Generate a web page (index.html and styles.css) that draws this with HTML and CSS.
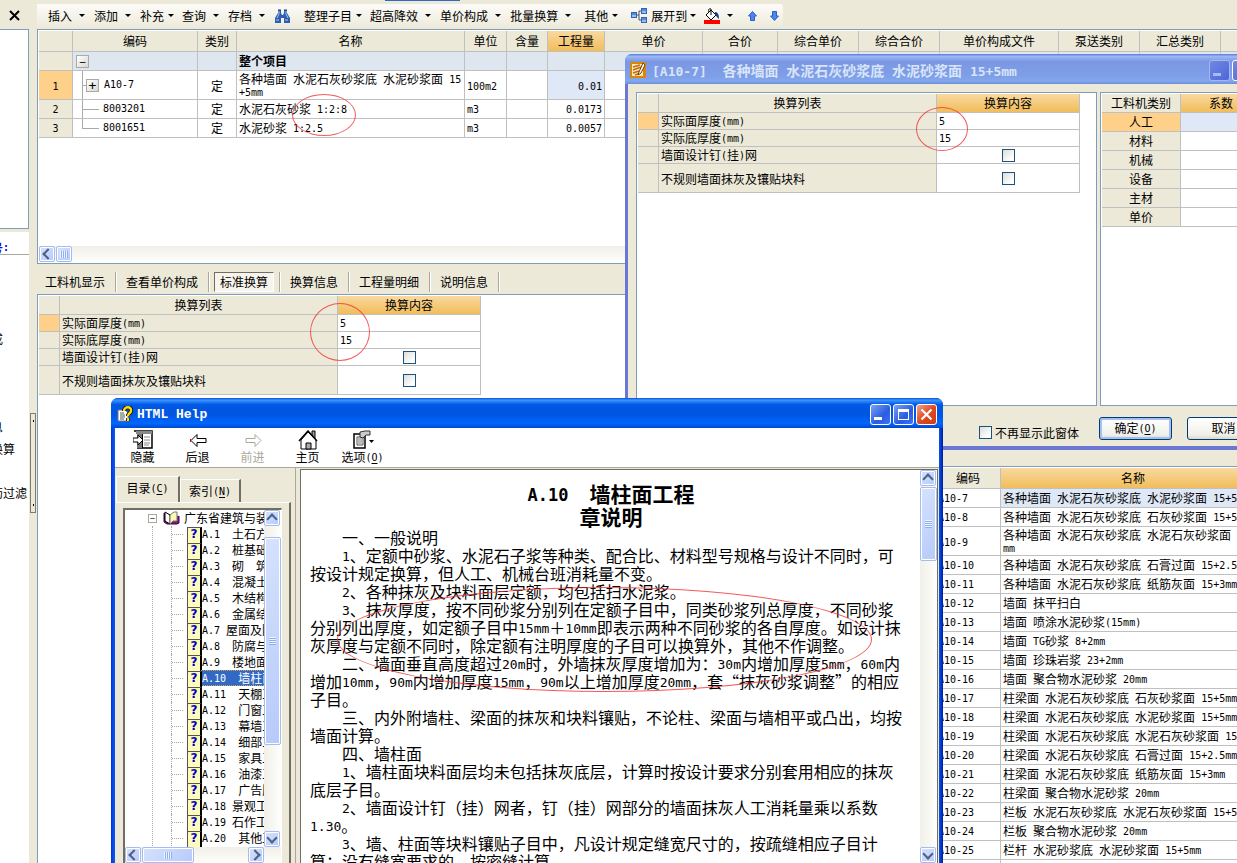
FILE: index.html
```html
<!DOCTYPE html>
<html lang="zh-CN">
<head>
<meta charset="utf-8">
<title>工程计价</title>
<link rel="stylesheet" href="styles.css">
</head>
<body>
<div class="desktop">
  <div class="app">
    <aside class="sidebar">
      <div class="sidebar-bar"><button class="plain" aria-label="关闭"><svg width="11" height="11" viewBox="0 0 11 11"><path d="M1 1L10 10M10 1L1 10" stroke="#000" stroke-width="2"/></svg></button></div>
      <div class="sidebar-top"></div>
      <div class="sidebar-bottom">
        <a class="sidebar-link" href="#">专业编号:</a>
        <ul class="sidebar-list">
          <li>已组成</li>
          <li class="skip-three">材信息</li>
          <li>标准换算</li>
          <li class="skip-one">材料药过滤</li>
        </ul>
      </div>
    </aside>
    <div class="gutter"><button class="grip" aria-label="折叠面板"><i></i><i></i></button></div>
    <main class="main">
      <div class="top-strip"><span class="top-accent"></span></div>
      <nav class="toolbar">
        <i class="handle"></i>
        <button class="menu">插入</button>
        <button class="menu">添加</button>
        <button class="menu tight">补充</button>
        <button class="menu">查询</button>
        <button class="menu">存档</button>
        <button class="plain" aria-label="查找"><svg width="17" height="16" viewBox="0 0 17 16"><path d="M4 2h3v3l1 2h1l1-2V2h3v3l3 5v5H10v-5H7v5H1v-5l3-5z" fill="#2f5fb0"/><path d="M5 3v3L3 10M12 3v3l2 4M2 12h3M11 12h3" stroke="#a9c8f5" fill="none"/><path d="M4 2h3M10 2h3" stroke="#1b3a78"/></svg></button>
        <i class="sep"></i>
        <button class="menu tight">整理子目</button>
        <button class="menu">超高降效</button>
        <button class="menu">单价构成</button>
        <button class="menu">批量换算</button>
        <i class="sep"></i>
        <button class="menu tight">其他</button>
        <i class="sep"></i>
        <button class="menu tight icon-menu"><svg width="17" height="16" viewBox="0 0 17 16"><path d="M5 7h3M8 3v9M8 3h3M8 12h3" stroke="#555" fill="none"/><g fill="#8ec0f5" stroke="#3565b5"><rect x=".5" y="4.500" width="5" height="5"/><rect x="10.500" y=".5" width="5" height="5"/><rect x="10.500" y="9.500" width="5" height="5"/></g><path d="M1 6h4M11 2h4M11 11h4" stroke="#2255c0"/></svg>展开到</button>
        <button class="menu" aria-label="填充颜色"><svg width="16" height="16" viewBox="0 0 16 16"><path d="M2 7l5-5 5 5-5 5z" fill="#fff" stroke="#000"/><path d="M7 7V1c-2-1-3 1-2 3" stroke="#000" fill="none"/><path d="M11 4c3 0 4 3 4 7-2-1-2-3-4-4z" fill="#123a90"/><path d="M0 12h16v4H0z" fill="#f00"/></svg></button>
        <button class="plain arrow-btn" aria-label="上移"><svg width="9" height="10" viewBox="0 0 9 10"><path d="M4.500 .5L8.500 5H6.500V9.500H2.500V5H.5z" fill="#4d86ee" stroke="#2d5fc8"/></svg></button>
        <button class="plain arrow-btn" aria-label="下移"><svg width="9" height="10" viewBox="0 0 9 10"><path d="M4.500 9.500L8.500 5H6.500V.5H2.500V5H.5z" fill="#4d86ee" stroke="#2d5fc8"/></svg></button>
      </nav>
      <section class="panel quota">
        <table class="grid quota-grid">
          <colgroup><col class="w34"><col class="w125"><col class="w39"><col class="w228"><col class="w42"><col class="w41"><col class="w57"><col class="w98"><col class="w75"><col class="w81"><col class="w81"><col class="w119"><col class="w81"><col class="w81"><col class="w81"></colgroup>
          <thead><tr class="h21"><th></th><th>编码</th><th>类别</th><th>名称</th><th>单位</th><th>含量</th><th class="hot">工程量</th><th>单价</th><th>合价</th><th>综合单价</th><th>综合合价</th><th>单价构成文件</th><th>泵送类别</th><th>汇总类别</th><th></th></tr></thead>
          <tbody>
            <tr class="h19 project"><td class="num"></td><td><div class="code root"><button class="toggle" aria-label="折叠">−</button></div></td><td></td><td><b>整个项目</b></td><td></td><td></td><td></td><td></td><td></td><td></td><td></td><td></td><td></td><td></td><td></td></tr>
            <tr class="h29"><td class="num picked">1</td><td><div class="code"><span class="stem mid"></span><button class="toggle" aria-label="展开">+</button>A10-7</div></td><td class="center">定</td><td>各种墙面 水泥石灰砂浆底 水泥砂浆面 15<br>+5mm</td><td>100m2</td><td></td><td class="right soft">0.01</td><td></td><td></td><td></td><td></td><td></td><td></td><td></td><td></td></tr>
            <tr class="h19"><td class="num">2</td><td><div class="code"><span class="stem mid long"></span>8003201</div></td><td class="center">定</td><td>水泥石灰砂浆 1:2:8</td><td>m3</td><td></td><td class="right">0.0173</td><td></td><td></td><td></td><td></td><td></td><td></td><td></td><td></td></tr>
            <tr class="h19"><td class="num">3</td><td><div class="code"><span class="stem long"></span>8001651</div></td><td class="center">定</td><td>水泥砂浆 1:2.5</td><td>m3</td><td></td><td class="right">0.0057</td><td></td><td></td><td></td><td></td><td></td><td></td><td></td><td></td></tr>
          </tbody>
        </table>
        <div class="scroll-x"><button class="sb left" aria-label="向左滚动"></button><span class="thumb-x"></span></div>
      </section>
      <div class="lower">
        <div class="detail">
          <nav class="tabs">
            <button>工料机显示</button><i></i><button>查看单价构成</button><i></i><button class="pressed">标准换算</button><i></i><button>换算信息</button><i></i><button>工程量明细</button><i></i><button>说明信息</button><i></i>
          </nav>
          <section class="panel detail-panel">
            <table class="grid convert">
              <colgroup><col class="w21"><col class="w278"><col class="w143"></colgroup>
              <thead><tr class="h19"><th></th><th>换算列表</th><th class="hot">换算内容</th></tr></thead>
              <tbody>
                <tr class="h17"><td class="picked"></td><td class="name">实际面厚度(mm)</td><td>5</td></tr>
                <tr class="h17"><td class="name"></td><td class="name">实际底厚度(mm)</td><td>15</td></tr>
                <tr class="h17"><td class="name"></td><td class="name"><label for="net1">墙面设计钉(挂)网</label></td><td class="center"><input type="checkbox" id="net1"></td></tr>
                <tr class="h29"><td class="name"></td><td class="name"><label for="irr1">不规则墙面抹灰及镶贴块料</label></td><td class="center"><input type="checkbox" id="irr1"></td></tr>
              </tbody>
            </table>
          </section>
        </div>
        <section class="panel catalog">
          <table class="grid catalog-grid">
            <colgroup><col class="w34"><col class="w65"><col class="w265"></colgroup>
            <thead><tr class="h21"><th></th><th>编码</th><th class="hot">名称</th></tr></thead>
            <tbody>
              <tr class="h19"><td></td><td>A10-7</td><td class="soft">各种墙面 水泥石灰砂浆底 水泥砂浆面 15+5mm</td></tr>
              <tr class="h19"><td></td><td>A10-8</td><td>各种墙面 水泥石灰砂浆底 石灰砂浆面 15+5mm</td></tr>
              <tr class="h29"><td></td><td>A10-9</td><td>各种墙面 水泥石灰砂浆底 水泥石灰砂浆面 15+5<br>mm</td></tr>
              <tr class="h19"><td></td><td>A10-10</td><td>各种墙面 水泥石灰砂浆底 石膏过面 15+2.5mm</td></tr>
              <tr class="h19"><td></td><td>A10-11</td><td>各种墙面 水泥石灰砂浆底 纸筋灰面 15+3mm</td></tr>
              <tr class="h19"><td></td><td>A10-12</td><td>墙面 抹平扫白</td></tr>
              <tr class="h19"><td></td><td>A10-13</td><td>墙面 喷涂水泥砂浆(15mm)</td></tr>
              <tr class="h19"><td></td><td>A10-14</td><td>墙面 TG砂浆 8+2mm</td></tr>
              <tr class="h19"><td></td><td>A10-15</td><td>墙面 珍珠岩浆 23+2mm</td></tr>
              <tr class="h19"><td></td><td>A10-16</td><td>墙面 聚合物水泥砂浆 20mm</td></tr>
              <tr class="h19"><td></td><td>A10-17</td><td>柱梁面 水泥石灰砂浆底 石灰砂浆面 15+5mm</td></tr>
              <tr class="h19"><td></td><td>A10-18</td><td>柱梁面 水泥石灰砂浆底 水泥砂浆面 15+5mm</td></tr>
              <tr class="h19"><td></td><td>A10-19</td><td>柱梁面 水泥石灰砂浆底 水泥石灰砂浆面 15+5mm</td></tr>
              <tr class="h19"><td></td><td>A10-20</td><td>柱梁面 水泥石灰砂浆底 石膏过面 15+2.5mm</td></tr>
              <tr class="h19"><td></td><td>A10-21</td><td>柱梁面 水泥石灰砂浆底 纸筋灰面 15+3mm</td></tr>
              <tr class="h19"><td></td><td>A10-22</td><td>柱梁面 聚合物水泥砂浆 20mm</td></tr>
              <tr class="h19"><td></td><td>A10-23</td><td>栏板 水泥石灰砂浆底 水泥石灰砂浆面 15+5mm</td></tr>
              <tr class="h19"><td></td><td>A10-24</td><td>栏板 聚合物水泥砂浆 20mm</td></tr>
              <tr class="h19"><td></td><td>A10-25</td><td>栏杆 水泥砂浆底 水泥砂浆面 15+5mm</td></tr>
              <tr class="h19"><td></td><td></td><td></td></tr>
            </tbody>
          </table>
        </section>
      </div>
    </main>
  </div>

  <div class="window dialog" role="dialog" aria-label="换算">
    <header class="title-bar">
      <svg width="16" height="16" viewBox="0 0 16 16"><path d="M0 0h16v16H0z" fill="#d9860c"/><path d="M2 2h11v12H2z" fill="#fbe9b8"/><path d="M3 5l7-2M3 8l8-3M3 11l6-2M5 13l3-1" stroke="#c06a10" stroke-width="1.500"/><path d="M13 1L9 10l-1 3 3-2 4-8z" fill="#fff" stroke="#7a3a08"/></svg>
      <span class="title-text">[A10-7]  各种墙面 水泥石灰砂浆底 水泥砂浆面 15+5mm</span>
      <span class="title-buttons"><button class="win-btn" aria-label="最小化"><i class="min"></i></button><button class="win-btn" aria-label="最大化"><i class="max"></i></button><button class="win-btn" aria-label="关闭"></button></span>
    </header>
    <div class="dialog-body">
      <section class="panel dialog-list">
        <table class="grid convert">
          <colgroup><col class="w21"><col class="w278"><col class="w143"></colgroup>
          <thead><tr class="h19"><th></th><th>换算列表</th><th class="hot">换算内容</th></tr></thead>
          <tbody>
            <tr class="h17"><td class="picked"></td><td class="name">实际面厚度(mm)</td><td>5</td></tr>
            <tr class="h17"><td class="name"></td><td class="name">实际底厚度(mm)</td><td>15</td></tr>
            <tr class="h17"><td class="name"></td><td class="name"><label for="net2">墙面设计钉(挂)网</label></td><td class="center"><input type="checkbox" id="net2"></td></tr>
            <tr class="h29"><td class="name"></td><td class="name"><label for="irr2">不规则墙面抹灰及镶贴块料</label></td><td class="center"><input type="checkbox" id="irr2"></td></tr>
          </tbody>
        </table>
      </section>
      <section class="panel dialog-factor">
        <table class="grid factor">
          <colgroup><col class="w79"><col class="w81"></colgroup>
          <thead><tr class="h19"><th>工料机类别</th><th class="hot">系数</th></tr></thead>
          <tbody>
            <tr class="h19"><td class="num picked">人工</td><td class="soft"></td></tr>
            <tr class="h19"><td class="num">材料</td><td></td></tr>
            <tr class="h19"><td class="num">机械</td><td></td></tr>
            <tr class="h19"><td class="num">设备</td><td></td></tr>
            <tr class="h19"><td class="num">主材</td><td></td></tr>
            <tr class="h19"><td class="num">单价</td><td></td></tr>
          </tbody>
        </table>
      </section>
    </div>
    <footer class="dialog-foot">
      <label class="again"><input type="checkbox">不再显示此窗体</label>
      <button class="xp default">确定(<u>O</u>)</button>
      <button class="xp">取消</button>
    </footer>
  </div>

  <div class="window help" role="dialog" aria-label="HTML Help">
    <header class="title-bar">
      <svg width="16" height="16" viewBox="0 0 16 16"><path d="M1 4h7l3 3v8H1z" fill="#fff" stroke="#777"/><path d="M3 7h4M3 9h5M3 11h5M3 13h4" stroke="#555"/><path d="M7 5c0-5 8-5 7 0 0 2-3 2-3 5M11 12v3" stroke="#000" stroke-width="4" fill="none"/><path d="M7 5c0-5 8-5 7 0 0 2-3 2-3 5M11 12v3" stroke="#fd0" stroke-width="2.500" fill="none"/></svg>
      <span class="title-text">HTML Help</span>
      <span class="title-buttons"><button class="win-btn" aria-label="最小化"><i class="min"></i></button><button class="win-btn" aria-label="最大化"><i class="max"></i></button><button class="win-btn close" aria-label="关闭"><svg width="13" height="13" viewBox="0 0 13 13"><path d="M1.500 1.500l10 10M11.500 1.500l-10 10" stroke="#fff" stroke-width="2.200"/></svg></button></span>
    </header>
    <nav class="help-tools">
      <button><svg width="20" height="20" viewBox="0 0 20 20"><path d="M1 1h18v17H4" fill="#fff" stroke="#000" stroke-width="1.500"/><path d="M3 1h16v3H3z" fill="#888"/><path d="M4 4h5v14H4z" fill="#777"/><path d="M9.500 4v14" stroke="#000"/><path d="M11 7h6M11 10h6M11 13h6M11 15h5" stroke="#888"/><path d="M0 8h5V5l5 5-5 5v-3H0z" fill="#fff" stroke="#000"/></svg>隐藏</button>
      <button><svg width="20" height="20" viewBox="0 0 20 20"><path d="M3 10.500l6-6v4h9v4H9v4z" fill="#fff" stroke="#000"/><path d="M2.500 9v3" stroke="#c00"/></svg>后退</button>
      <button class="off"><svg width="20" height="20" viewBox="0 0 20 20"><path d="M18 10.500l-6-6v4H3v4h9v4z" fill="#fff" stroke="#aca899"/></svg>前进</button>
      <button><svg width="20" height="20" viewBox="0 0 20 20"><path d="M14 6V1h3v8" fill="#999" stroke="#000"/><path d="M3 10v9h15v-9l-8-8z" fill="#fff" stroke="#000"/><path d="M1 11L10 1l9 10" fill="none" stroke="#000" stroke-width="1.500"/><path d="M8 13h5v6H8z" fill="#aaa" stroke="#000"/></svg>主页</button>
      <button><svg width="22" height="20" viewBox="0 0 22 20"><path d="M2 4h11v14H2z" fill="#fff" stroke="#000" stroke-width="1.500"/><path d="M5 7h6v8H5z" fill="#fff" stroke="#555"/><path d="M6 9h4M6 11h4M6 13h4" stroke="#777"/><path d="M8 2l5-1h5v4h-4l-3 3-3-1z" fill="#ccc" stroke="#333"/><path d="M17 10h5l-2.500 3z" fill="#000"/></svg><span>选项(<u>O</u>)</span></button>
    </nav>
    <div class="help-body">
      <div class="nav-pane">
        <div class="page-tabs"><button class="on">目录(<u>C</u>)</button><button>索引(<u>N</u>)</button></div>
        <div class="tab-page">
          <div class="tree-box">
            <div class="tree-view">
              <div class="tree">
                <div class="tree-root"><span class="minus">−</span><svg width="17" height="14" viewBox="0 0 17 14"><path d="M1 2v9l3 2h10l2-1V5" fill="#7a1a7a" stroke="#400040"/><path d="M2 1l5 3v9l-5-3z" fill="#fff" stroke="#000"/><path d="M7 4l4-3h3v9h-4l-3 3z" fill="#fff8b0" stroke="#777"/></svg>广东省建筑与装饰</div>
                <ul>
                  <li><span class="topic">A.1  土石方工程</span></li>
                  <li><span class="topic">A.2  桩基础工程</span></li>
                  <li><span class="topic">A.3  砌　筑工程</span></li>
                  <li><span class="topic">A.4  混凝土工程</span></li>
                  <li><span class="topic">A.5  木结构工程</span></li>
                  <li><span class="topic">A.6  金属结构工程</span></li>
                  <li><span class="topic">A.7 屋面及防水工程</span></li>
                  <li><span class="topic">A.8  防腐与保温</span></li>
                  <li><span class="topic">A.9  楼地面工程</span></li>
                  <li><span class="topic chosen">A.10  墙柱面工程</span></li>
                  <li><span class="topic">A.11  天棚工程</span></li>
                  <li><span class="topic">A.12  门窗工程</span></li>
                  <li><span class="topic">A.13  幕墙工程</span></li>
                  <li><span class="topic">A.14  细部工程</span></li>
                  <li><span class="topic">A.15  家具工程</span></li>
                  <li><span class="topic">A.16  油漆工程</span></li>
                  <li><span class="topic">A.17  广告牌</span></li>
                  <li><span class="topic">A.18 景观工程</span></li>
                  <li><span class="topic">A.19 石作工程</span></li>
                  <li><span class="topic">A.20  其他工程</span></li>
                </ul>
              </div>
              <div class="scroll-y"><button class="sb up" aria-label="向上滚动"></button><span class="track-gap"></span><span class="thumb-y"></span><span class="fill"></span><button class="sb down" aria-label="向下滚动"></button></div>
            </div>
            <div class="tree-scroll"><button class="sb left" aria-label="向左滚动"></button><span class="thumb-x"></span><span class="fill"></span><button class="sb right-arrow" aria-label="向右滚动"></button></div>
          </div>
        </div>
      </div>
      <div class="doc-pane">
        <article class="doc">
          <h1>A.10　墙柱面工程<br>章说明</h1>
          <p>一、一般说明</p>
          <p>1、定额中砂浆、水泥石子浆等种类、配合比、材料型号规格与设计不同时，可<br>按设计规定换算，但人工、机械台班消耗量不变。</p>
          <p>2、各种抹灰及块料面层定额，均包括扫水泥浆。</p>
          <p>3、抹灰厚度，按不同砂浆分别列在定额子目中，同类砂浆列总厚度，不同砂浆<br>分别列出厚度，如定额子目中15mm＋10mm即表示两种不同砂浆的各自厚度。如设计抹<br>灰厚度与定额不同时，除定额有注明厚度的子目可以换算外，其他不作调整。</p>
          <p>二、墙面垂直高度超过20m时，外墙抹灰厚度增加为：30m内增加厚度5mm，60m内<br>增加10mm，90m内增加厚度15mm，90m以上增加厚度20mm，套“抹灰砂浆调整”的相应<br>子目。</p>
          <p>三、内外附墙柱、梁面的抹灰和块料镶贴，不论柱、梁面与墙相平或凸出，均按<br>墙面计算。</p>
          <p>四、墙柱面</p>
          <p>1、墙柱面块料面层均未包括抹灰底层，计算时按设计要求分别套用相应的抹灰<br>底层子目。</p>
          <p>2、墙面设计钉（挂）网者，钉（挂）网部分的墙面抹灰人工消耗量乘以系数<br>1.30。</p>
          <p>3、墙、柱面等块料镶贴子目中，凡设计规定缝宽尺寸的，按疏缝相应子目计<br>算；没有缝宽要求的，按密缝计算。</p>
        </article>
        <div class="scroll-y"><button class="sb up" aria-label="向上滚动"></button><span class="thumb-y doc-thumb"></span><span class="fill"></span><button class="sb down" aria-label="向下滚动"></button></div>
      </div>
    </div>
  </div>

  <i class="mark mark-ratio"></i>
  <i class="mark mark-detail"></i>
  <i class="mark mark-dialog"></i>
  <i class="mark mark-doc"></i>
</div>
<script src="latin.js"></script>
</body>
</html>
```
FILE: latin.js
```js
// Wraps runs of Latin text so that they get the half-width face.
(function () {
  var walker = document.createTreeWalker(document.querySelector('.desktop'), NodeFilter.SHOW_TEXT);
  var nodes = [];
  while (walker.nextNode()) {
    var n = walker.currentNode;
    if (/\S/.test(n.data) && /[\x20-\x7e]/.test(n.data)) nodes.push(n);
  }
  nodes.forEach(function (node) {
    var out = document.createDocumentFragment();
    node.data.split(/([\x20-\x7e]+)/).forEach(function (part) {
      if (!part) return;
      if (/^[\x20-\x7e]+$/.test(part)) {
        var s = document.createElement('span');
        s.className = 'latin';
        s.textContent = part;
        out.appendChild(s);
      } else {
        out.appendChild(document.createTextNode(part));
      }
    });
    node.replaceWith(out);
  });
})();
```
FILE: styles.css
```css
* { box-sizing: border-box; }

body {
  margin: 0;
  font: 12px/14px "Noto Sans CJK SC", sans-serif;
  color: #000;
  background: #ece9d8;
}

button {
  font: inherit;
  color: inherit;
  padding: 0;
  border: 0;
  background: none;
  white-space: nowrap;
}

.latin {
  font-family: "DejaVu Sans Mono", monospace;
  font-size: 10px;
  line-height: 0;
  vertical-align: 1px;
  white-space: pre;
}

.desktop {
  position: relative;
  height: 100vh;
  overflow: hidden;
}

/* main window */
.app {
  display: grid;
  grid-template-columns: 29px 8px minmax(0, 1fr);
  height: 100%;
}

.sidebar { display: flex; flex-direction: column; overflow: hidden; }
.sidebar-bar { height: 29px; padding: 10px 0 0 9px; line-height: 0; }
.sidebar-top {
  height: 200px;
  background: #fff;
  border: 1px solid #7f9db9;
  border-left: 0;
}
.sidebar-bottom { flex: 1; margin-top: 3px; background: #fff; }
.sidebar-link {
  display: flex;
  justify-content: flex-end;
  height: 23px;
  padding: 9px 20px 0 0;
  color: #00f;
  font-weight: bold;
  text-decoration: none;
  border-bottom: 1px solid #aca899;
  white-space: nowrap;
}
.sidebar-link .latin { line-height: 14px; }
.sidebar-list {
  margin: 73px 0 0 -33px;
  padding: 0;
  list-style: none;
  line-height: 22px;
  white-space: nowrap;
}
.skip-three { margin-top: 66px; }
.skip-one { margin-top: 22px; }

.gutter { padding: 413px 0 0 1px; }
.grip {
  display: flex;
  flex-direction: column;
  justify-content: space-between;
  align-items: center;
  width: 6px;
  height: 100px;
  padding: 6px 0;
  border: 1px solid #807d70;
}
.grip i { width: 1px; height: 2px; background: #000; }

.main { display: flex; flex-direction: column; min-width: 0; }
.top-strip { height: 4px; padding-left: 348px; }
.top-accent { display: block; width: 75px; height: 1px; background: #316ac5; }

.toolbar {
  display: flex;
  align-items: center;
  align-self: flex-start;
  width: 746px;
  height: 25px;
  padding: 0 0 2px 5px;
  border-radius: 0 3px 3px 0;
  background: linear-gradient(#fcfbf8, #f3f1e6 60%, #ece9d8);
}
.handle { width: 2px; height: 15px; margin-right: 6px; background: repeating-linear-gradient(#b8b4a2 0 2px, transparent 2px 4px); }
.sep { width: 1px; height: 15px; margin: 0 7px 0 6px; background: #b8b4a2; }
.menu { display: flex; align-items: center; gap: 7px; margin-right: 9px; }
.menu.tight { gap: 4px; margin-right: 8px; }
.menu.icon-menu { gap: 3px; }
.menu:has(+ .sep) { margin-right: 0; }
.menu::after {
  content: "";
  border: 3px solid transparent;
  border-top-color: #000;
  border-bottom: 0;
}
.plain { line-height: 0; }
.arrow-btn { margin: 0 7px 0 6px; }

.panel {
  overflow: hidden;
  background: #fff;
  border: 1px solid #7f9db9;
  padding: 1px;
}

.quota {
  display: flex;
  flex-direction: column;
  justify-content: space-between;
  height: 235px;
  border-right: 0;
  padding-right: 0;
}

/* tables */
.grid {
  table-layout: fixed;
  width: 100%;
  border-collapse: separate;
  border-spacing: 0;
}
.quota-grid { width: 1263px; }
.convert { width: 442px; }
.factor { width: 160px; }
.catalog-grid { width: 364px; }

.w21 { width: 21px; }
.w34 { width: 34px; }
.w39 { width: 39px; }
.w41 { width: 41px; }
.w42 { width: 42px; }
.w57 { width: 57px; }
.w65 { width: 65px; }
.w75 { width: 75px; }
.w79 { width: 79px; }
.w81 { width: 81px; }
.w98 { width: 98px; }
.w119 { width: 119px; }
.w125 { width: 125px; }
.w143 { width: 143px; }
.w228 { width: 228px; }
.w265 { width: 265px; }
.w278 { width: 278px; }

.h17 { height: 17px; }
.h19 { height: 19px; }
.h21 { height: 21px; }
.h29 { height: 29px; }

.grid th, .grid td {
  padding: 0 2px;
  border-right: 1px solid #c0c0c0;
  border-bottom: 1px solid #c0c0c0;
  white-space: nowrap;
  overflow: hidden;
}
.grid th { background: #ece9d8; font-weight: normal; }
.grid .hot { background: linear-gradient(#f9d99f, #f1bd5b); }
.grid .num { background: #ece9d8; text-align: center; }
.grid .name { background: #ece9d8; }
.grid .picked { background: #ffd08a; }
.grid .soft { background: #dfe8f6; }
.grid .center { text-align: center; }
.grid .right { text-align: right; }
.grid .project td:not(.num) { background: #dee6f0; }
.h29 td { line-height: 13px; }

.code { display: flex; align-items: center; height: 18px; padding-left: 7px; }
.h29 .code { height: 28px; }
.code.root { padding-left: 1px; }
.code .toggle { margin-right: 5px; }
.toggle {
  width: 13px;
  height: 13px;
  border: 1px solid #aaa;
  background: linear-gradient(135deg, #fff, #d8d8d0);
  line-height: 9px;
  text-align: center;
}
.toggle .latin { font-size: 13px; }
.stem {
  align-self: stretch;
  width: 4px;
  background: linear-gradient(#aaa, #aaa) 0 50% / 100% 1px no-repeat, linear-gradient(#aaa, #aaa) 0 0 / 1px 50% no-repeat;
}
.stem.mid { background-size: 100% 1px, 1px 100%; }
.stem.long { width: 17px; margin-right: 4px; }

input[type="checkbox"] {
  appearance: none;
  display: block;
  width: 13px;
  height: 13px;
  margin: 0 auto;
  border: 1px solid #1c5180;
  background: linear-gradient(135deg, #dcdcd7, #fff 80%);
}

/* scroll bars */
.scroll-x, .tree-scroll { display: flex; gap: 1px; height: 16px; background: linear-gradient(#f0efe8, #fefefb); }
.scroll-y { display: flex; flex-direction: column; flex: none; gap: 1px; width: 17px; background: linear-gradient(90deg, #f0efe8, #fefefb); }
.fill { flex: 1; }
.sb, .thumb-x, .thumb-y {
  flex: none;
  border: 1px solid #a6bcee;
  border-radius: 2px;
  box-shadow: inset 0 0 0 1px #fff;
  background: linear-gradient(135deg, #d6e2fd, #b6cafa);
}
.sb { display: grid; place-items: center; width: 16px; height: 16px; }
.sb::after {
  content: "";
  width: 6px;
  height: 6px;
  border: solid #4d6185;
  border-width: 2px 0 0 2px;
}
.sb.left::after { transform: translateX(1px) rotate(-45deg); }
.sb.right-arrow::after { transform: translateX(-1px) rotate(135deg); }
.sb.up::after { transform: translateY(1px) rotate(45deg); }
.sb.down::after { transform: translateY(-1px) rotate(225deg); }
.thumb-x, .thumb-y { display: grid; place-items: center; }
.thumb-x { width: 16px; }
.thumb-x::after { content: ""; width: 8px; height: 7px; background: repeating-linear-gradient(90deg, #eef4fe 0 1px, #8cb0f8 1px 2px); }
.thumb-y::after { content: ""; width: 7px; height: 8px; background: repeating-linear-gradient(#eef4fe 0 1px, #8cb0f8 1px 2px); }

/* lower half */
.lower { display: grid; grid-template-columns: minmax(0, 1fr) 337px; flex: 1; min-height: 0; }
.detail { display: flex; flex-direction: column; min-height: 0; }
.tabs { display: flex; align-items: center; height: 30px; padding: 5px 0 0 3px; }
.tabs button { padding: 2px 5px; }
.tabs i { width: 1px; height: 20px; margin: 0 5px; background: #aca899; box-shadow: 1px 0 #fff; }
.tabs .pressed {
  border: 1px solid #fff;
  border-top-color: #716f64;
  border-left-color: #716f64;
  background: #f6f4ec;
}
.detail-panel { flex: 1; }
.catalog { margin-top: 202px; border-right: 0; padding-right: 0; }

/* floating windows */
.window { position: absolute; border-radius: 7px 7px 0 0; overflow: hidden; background: #ece9d8; }
.title-bar { display: flex; align-items: center; height: 30px; color: #fff; }
.title-text { flex: 1; font-weight: bold; white-space: pre; }
.title-buttons { display: flex; gap: 2px; }
.win-btn {
  display: grid;
  place-items: center;
  width: 21px;
  height: 21px;
  border: 1px solid #fff;
  border-radius: 3px;
  background: linear-gradient(135deg, #7ba2f3, #2a5be0 60%, #3c75f5);
}
.win-btn.close { background: linear-gradient(135deg, #f0a58c, #df4a22 50%, #d23a12); }
.win-btn .min { width: 8px; height: 3px; margin: 9px 5px 0 0; background: #fff; }
.win-btn .max { width: 11px; height: 11px; border: 1px solid #fff; border-top-width: 3px; }

.dialog { left: 625px; top: 54px; width: 657px; padding: 0 4px 4px 3px; background: #6a78d4; }
.dialog .title-bar {
  margin: 0 -4px 0 -3px;
  padding: 2px 6px 0 5px;
  gap: 6px;
  color: #d8e4f8;
  background: linear-gradient(#5b78d6, #9bb8f4 8%, #7b97e3 25%, #7f9fe8 75%, #82a8ec 90%, #6f8cdc);
}
.dialog .title-text { font-size: 14px; }
.dialog .title-text .latin { font-size: 13px; vertical-align: baseline; }
.dialog .win-btn { border-color: #a5b6f0; background: linear-gradient(135deg, #7088e4, #4e66d8); }
.dialog .win-btn .min { background: #a9baf2; }
.dialog .win-btn + .win-btn { border-color: #fff; }
.dialog-body { display: flex; gap: 3px; padding: 8px 8px 0; background: #ece9d8; }
.dialog-list { width: 461px; height: 314px; }
.dialog-factor { flex: 1; }
.dialog-foot {
  display: flex;
  align-items: center;
  gap: 15px;
  height: 40px;
  padding: 4px 8px 0 351px;
  background: #ece9d8;
}
.again { display: flex; align-items: center; gap: 3px; margin: 9px 5px 0 0; }
.xp {
  width: 73px;
  height: 23px;
  border: 1px solid #003c74;
  border-radius: 3px;
  background: linear-gradient(#fff, #f0f0ea 80%, #dcd8cc);
}
.xp.default { box-shadow: inset 0 0 0 2px #a5bff3; }

.help {
  display: flex;
  flex-direction: column;
  left: 111px;
  top: 398px;
  bottom: 0;
  width: 832px;
  padding: 0 4px;
  background: linear-gradient(90deg, #0831d9, #0855f0 3px, #0855f0 828px, #001ea0);
}
.help .title-bar {
  flex: none;
  margin: 0 -4px;
  padding: 2px 6px 0;
  gap: 4px;
  background: linear-gradient(#0a50d8, #3d95ff 7%, #0058e6 22%, #0055e0 55%, #0066ff 85%, #0048cc);
}
.help .title-text .latin { font-family: "Liberation Mono", monospace; font-size: 13px; }

.help-tools { display: flex; flex: none; height: 40px; padding-top: 2px; background: #fff; border-bottom: 1px solid #aca899; }
.help-tools button { display: flex; flex-direction: column; align-items: center; width: 55px; }
.help-tools .off { color: #aca899; }

.help-body { display: flex; flex: 1; min-height: 0; background: #ece9d8; }
.nav-pane { display: flex; flex-direction: column; width: 181px; padding: 8px 4px 0 1px; border-right: 1px solid #aca899; }
.page-tabs { display: flex; align-items: flex-end; height: 26px; }
.page-tabs button {
  width: 61px;
  height: 23px;
  border: 1px solid #fff;
  border-right: 2px solid #716f64;
  border-bottom: 0;
}
.page-tabs .on { width: 64px; height: 26px; padding-bottom: 4px; }
.tab-page { flex: 1; min-height: 0; padding: 5px 7px 0; border-top: 1px solid #fff; border-right: 2px solid #716f64; }
.tree-box {
  display: flex;
  flex-direction: column;
  height: 100%;
  border: solid #716f64;
  border-width: 2px 1px 0 2px;
  border-right-color: #fff;
  background: #fff;
}
.tree-view { display: flex; flex: 1; min-height: 0; }
.tree { flex: 1; min-width: 0; overflow: hidden; white-space: nowrap; }
.tree-root { display: flex; align-items: center; height: 16px; padding-left: 23px; gap: 6px; }
.tree-root svg { flex: none; margin-right: -2px; }
.minus { flex: none; width: 9px; height: 9px; border: 1px solid #aca899; line-height: 7px; font-size: 9px; text-align: center; }
.tree ul { margin: 0 0 0 27px; padding: 0; list-style: none; border-left: 1px dotted #aca899; }
.tree li { position: relative; display: flex; height: 16px; margin-left: 18px; border-left: 1px dotted #aca899; }
.tree li::before { content: ""; flex: none; width: 11px; height: 8px; margin-right: 4px; border-bottom: 1px dotted #aca899; }
.topic { height: 16px; padding: 1px 2px 0 1px; margin-left: 14px; }
.tree li::after {
  content: "?";
  position: absolute;
  left: 15px;
  top: 1px;
  width: 12px;
  height: 15px;
  border: 1px solid #555;
  border-right: 2px solid #000;
  border-bottom: 2px solid #000;
  background: #fffbb8;
  color: #00c;
  font: bold 12px/12px "DejaVu Sans", sans-serif;
  text-align: center;
}
.chosen { background: #316ac5; color: #fff; outline: 1px dotted #d8a040; outline-offset: -1px; }
.track-gap { height: 9px; }
.tree-view .scroll-y .thumb-y { height: 208px; }
.tree-scroll { padding-right: 17px; }
.tree-scroll .thumb-x { width: 52px; }

.doc-pane {
  display: flex;
  flex: 1;
  min-width: 0;
  margin: 1px 1px 0 4px;
  border: solid #716f64;
  border-width: 1px 1px 0 1px;
  background: #fff;
}
.doc { flex: 1; min-width: 0; padding: 12px 8px 0 9px; overflow: hidden; font-size: 16px; line-height: 18px; white-space: nowrap; }
.doc h1 { margin: 0; font-size: 21px; line-height: 23px; text-align: center; }
.doc .latin { font-size: 13px; }
.doc h1 .latin { font-size: 17px; }
.doc p { margin: 0; text-indent: 32px; }
.doc-thumb { height: 74px; }

/* red pen marks */
.mark { position: absolute; border: 1px solid rgba(240, 50, 50, .8); border-radius: 50%; pointer-events: none; }
.mark-ratio { left: 292px; top: 94px; width: 64px; height: 42px; }
.mark-detail { left: 310px; top: 303px; width: 60px; height: 58px; }
.mark-dialog { left: 916px; top: 107px; width: 52px; height: 44px; }
.mark-doc { left: 337px; top: 587px; width: 535px; height: 105px; }
```
